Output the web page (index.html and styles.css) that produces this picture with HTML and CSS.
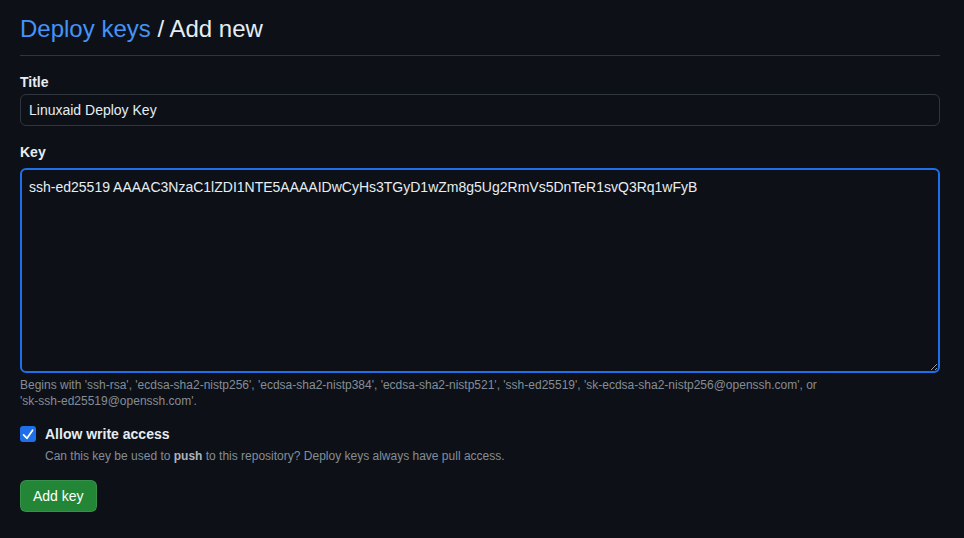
FILE: index.html
```html
<!DOCTYPE html>
<html lang="en">
<head>
<meta charset="utf-8">
<title>Deploy keys / Add new</title>
<link rel="stylesheet" href="styles.css">
</head>
<body>
<main class="page">
  <div class="subhead">
    <h2 class="subhead-heading"><a class="crumb" href="#">Deploy keys</a> / Add new</h2>
  </div>
  <form class="form">
    <div class="group">
      <label class="label label-title" for="title">Title</label>
      <input class="input" id="title" type="text" value="Linuxaid Deploy Key">
    </div>
    <div class="group">
      <label class="label label-key" for="key">Key</label>
      <textarea class="textarea" id="key">ssh-ed25519 AAAAC3NzaC1lZDI1NTE5AAAAIDwCyHs3TGyD1wZm8g5Ug2RmVs5DnTeR1svQ3Rq1wFyB</textarea>
      <p class="note">Begins with <span class="nw">'ssh-rsa',</span> <span class="nw">'ecdsa-sha2-nistp256',</span> <span class="nw">'ecdsa-sha2-nistp384',</span> <span class="nw">'ecdsa-sha2-nistp521',</span> <span class="nw">'ssh-ed25519',</span> <span class="nw">'sk-ecdsa-sha2-nistp256@openssh.com',</span> or <span class="nw">'sk-ssh-ed25519@openssh.com'.</span></p>
    </div>
    <div class="check">
      <span class="checkbox">
        <svg viewBox="0 0 16 16" width="16" height="16"><path d="M3.6 8.9L7 12.3L12.6 4.2" fill="none" stroke="#fff" stroke-width="1.7" stroke-linecap="round" stroke-linejoin="round"/></svg>
      </span>
      <div class="check-body">
        <div class="check-label">Allow write access</div>
        <div class="check-note">Can this key be used to <strong>push</strong> to this repository? Deploy keys always have pull access.</div>
      </div>
    </div>
    <button class="btn" type="button">Add key</button>
  </form>
</main>
</body>
</html>
```

FILE: styles.css
```css
html, body {
  margin: 0;
  background: #0d1117;
  color-scheme: dark;
}
body {
  font-family: "Liberation Sans", Arial, sans-serif;
  color: #e6edf3;
  font-size: 14px;
}
.page {
  padding: 11px 24px 0 20px;
}
.subhead {
  border-bottom: 1px solid #30363d;
  padding-bottom: 8px;
  margin-bottom: 16px;
}
.subhead-heading {
  margin: 0;
  font-size: 24px;
  font-weight: 400;
  line-height: 36px;
  color: #e6edf3;
}
.crumb {
  color: #4493f8;
  text-decoration: none;
}
.form {
  display: flex;
  flex-direction: column;
}
.group {
  display: flex;
  flex-direction: column;
}
.label {
  display: block;
  font-weight: 700;
  font-size: 14px;
  line-height: 20px;
  color: #e6edf3;
}
.label-title {
  margin-bottom: 2px;
}
.label-key {
  margin-top: 16px;
  margin-bottom: 6px;
}
.input {
  box-sizing: border-box;
  height: 32px;
  width: 100%;
  padding: 5px 8px;
  border: 1px solid #30363d;
  border-radius: 6px;
  background: #0d1117;
  color: #e6edf3;
  font-family: inherit;
  font-size: 14px;
  outline: none;
}
.textarea {
  box-sizing: border-box;
  height: 205px;
  width: 100%;
  padding: 7px 7px;
  border: 2px solid #1f6feb;
  border-radius: 6px;
  background: #0d1117;
  color: #e6edf3;
  font-family: inherit;
  font-size: 14px;
  line-height: 21px;
  outline: none;
  resize: vertical;
  margin: 0;
}
.note {
  margin: 4px 0 0;
  font-size: 12px;
  line-height: 16px;
  color: #848d97;
}
.nw {
  white-space: nowrap;
}
.check {
  display: flex;
  gap: 9px;
  margin-top: 17px;
  align-items: flex-start;
}
.checkbox {
  flex: none;
  width: 16px;
  height: 16px;
  margin-top: 0;
  border-radius: 3px;
  background: #1f6feb;
  display: flex;
  align-items: center;
  justify-content: center;
}
.checkbox svg {
  display: block;
}
.check-label {
  font-weight: 700;
  font-size: 14px;
  line-height: 17px;
  color: #e6edf3;
}
.check-note {
  margin-top: 5px;
  font-size: 12px;
  line-height: 16px;
  color: #848d97;
}
.check-note strong {
  color: #adb4bc;
}
.btn {
  align-self: flex-start;
  margin-top: 16px;
  height: 32px;
  padding: 0 12px;
  border: 1px solid rgba(240, 246, 252, 0.1);
  border-radius: 6px;
  background: #238636;
  color: #ffffff;
  font-family: inherit;
  font-size: 14px;
  line-height: 20px;
  cursor: pointer;
}
```
